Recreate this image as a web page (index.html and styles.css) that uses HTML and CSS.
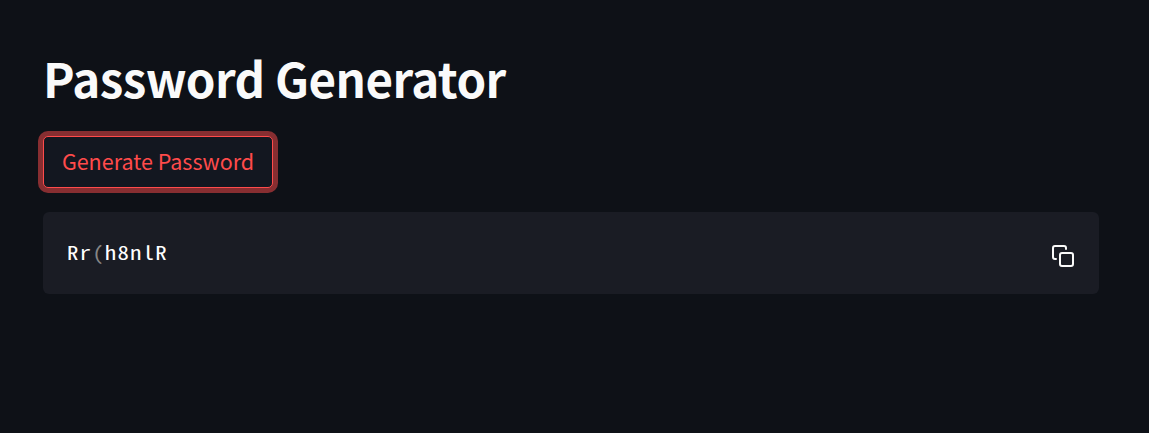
FILE: index.html
```html
<!DOCTYPE html>
<html lang="en">
<head>
<meta charset="utf-8">
<title>Password Generator</title>
<link rel="stylesheet" href="styles.css">
</head>
<body>
<main class="app">
  <h1 class="title">Password Generator</h1>
  <button class="generate">Generate Password</button>
  <div class="code-block">
    <code class="password">Rr<span class="punctuation">(</span>h8nlR</code>
    <svg class="copy" viewBox="0 0 24 24" fill="none" stroke="currentColor" stroke-width="2" stroke-linecap="round" stroke-linejoin="round" aria-label="Copy">
      <rect x="9" y="9" width="13" height="13" rx="2"/>
      <path d="M5 15H4a2 2 0 0 1-2-2V4a2 2 0 0 1 2-2h9a2 2 0 0 1 2 2v1"/>
    </svg>
  </div>
</main>
</body>
</html>
```
FILE: styles.css
```css
* {
  box-sizing: border-box;
}

body {
  margin: 0;
  min-height: 100vh;
  background: #0e1117;
  color: #fafafa;
  font-family: "Noto Sans CJK SC", "Noto Sans", sans-serif;
}

.app {
  display: flex;
  flex-direction: column;
  align-items: flex-start;
  padding: 46px 50px 0 43px;
}

.title {
  margin: 0 0 26px;
  font-size: 47.5px;
  font-weight: 700;
  line-height: 64px;
  letter-spacing: -0.53px;
  white-space: nowrap;
}

.generate {
  width: 230px;
  height: 52px;
  margin: 0 0 24px;
  padding: 0 0 2px;
  border: 1px solid #ff4b4b;
  border-radius: 5px;
  background: #131720;
  box-shadow: 0 0 0 5px rgba(255, 75, 75, 0.5);
  color: #ff4b4b;
  font-family: inherit;
  font-size: 21.5px;
  line-height: 48px;
  white-space: nowrap;
}

.code-block {
  display: flex;
  align-items: center;
  justify-content: space-between;
  width: 100%;
  height: 82px;
  padding: 0 24px;
  border-radius: 6px;
  background: #1a1c24;
}

.password {
  margin-bottom: 2px;
  color: #fff;
  font-family: "Noto Sans Mono CJK SC", "DejaVu Sans Mono", monospace;
  font-size: 19px;
  line-height: 34px;
  letter-spacing: 1px;
  transform: scaleX(1.2);
  transform-origin: left center;
}

.punctuation {
  color: #868686;
}

.copy {
  width: 24px;
  height: 24px;
  margin-top: 6px;
}
```
